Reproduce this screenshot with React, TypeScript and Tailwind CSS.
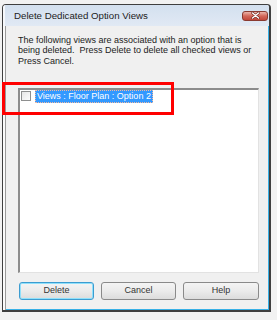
import React from "react";

const font = { fontFamily: '"Liberation Sans", Arial, sans-serif' };

function CloseButton() {
  return (
    <div className="w-[26px] h-[10px] rounded-[3px] border border-[#8a3a30] bg-gradient-to-b from-[#eab4aa] via-[#d2675a] to-[#c2473a] flex items-center justify-center">
      <svg width="9" height="7" viewBox="0 0 9 7">
        <path d="M1.5 1 L7.5 6 M7.5 1 L1.5 6" stroke="#6b2018" strokeWidth="2.6" strokeLinecap="round" />
        <path d="M1.5 1 L7.5 6 M7.5 1 L1.5 6" stroke="#ffffff" strokeWidth="1.5" strokeLinecap="round" />
      </svg>
    </div>
  );
}

function Btn({ label, primary, w }: { label: string; primary?: boolean; w: string }) {
  return (
    <div
      className={
        "h-[18px] rounded-[3px] border flex items-center justify-center text-[9px] text-[#333] bg-gradient-to-b from-[#f4f4f4] via-[#ebebeb] to-[#dcdcdc] " +
        w +
        " " +
        (primary ? "border-[#3c9cd0] shadow-[inset_0_0_0_1px_#8fe0fb]" : "border-[#8a8a8a]")
      }
    >
      {label}
    </div>
  );
}

export default function App() {
  return (
    <div className="w-[277px] h-[320px] bg-[#f2f2f2] relative overflow-hidden pt-[4px] pl-[2px]" style={font}>
      <div className="w-[269px] h-[308px] border-t border-l border-r-2 border-b-2 border-[#3f3f3f] rounded-t-[4px] flex flex-col overflow-hidden">
        {/* title bar */}
        <div className="h-[21px] shrink-0 flex items-center justify-between pl-[9px] pr-[1px] bg-gradient-to-b from-[#d3e0ef] to-[#e1e9f4] border-l-2 border-l-[#f6f8fb]">
          <span className="text-[9.7px] text-[#222] leading-none pt-[1px]">Delete Dedicated Option Views</span>
          <CloseButton />
        </div>
        {/* client */}
        <div className="flex-1 flex border-l-2 border-l-[#fafafa]">
          <div className="w-px bg-[#9a9a9a]" />
          <div className="flex-1 flex flex-col bg-[#f0f0f0] border-r border-b border-[#37b0e6]">
            <div className="pl-[12px] pt-[9px] pr-[4px] text-[9px] leading-[10.4px] text-[#222] whitespace-nowrap">
              The following views are associated with an option that is
              <br />
              being deleted.&nbsp; Press Delete to delete all checked views or
              <br />
              Press Cancel.
            </div>
            <div className="ml-[12px] mt-[22px] w-[241px] h-[185px] bg-white border-t-2 border-l-2 border-t-[#8c8c8c] border-l-[#8c8c8c] border-r border-b border-r-[#e2e2e2] border-b-[#e2e2e2]">
              <div className="flex items-start h-[13px] pl-[1px]">
                <div className="mt-[1px] w-[10px] h-[10px] border border-[#8e8f8f] bg-gradient-to-br from-[#e6e6e6] to-[#fdfdfd]" />
                <div className="ml-[4px] h-[13px] px-[1px] bg-[#3399ff] text-white text-[9px] leading-[11px] border border-dotted border-[#f3b9a0] whitespace-nowrap">
                  Views : Floor Plan : Option 2
                </div>
              </div>
            </div>
            <div className="flex ml-[13px] mt-[9px] gap-[7px]">
              <Btn label="Delete" primary w="w-[75px]" />
              <Btn label="Cancel" w="w-[75px]" />
              <Btn label="Help" w="w-[76px]" />
            </div>
          </div>
        </div>
      </div>
      <div className="absolute left-[2px] top-[82px] w-[172px] h-[33px] border-[3px] border-[#ff0000]" />
    </div>
  );
}
